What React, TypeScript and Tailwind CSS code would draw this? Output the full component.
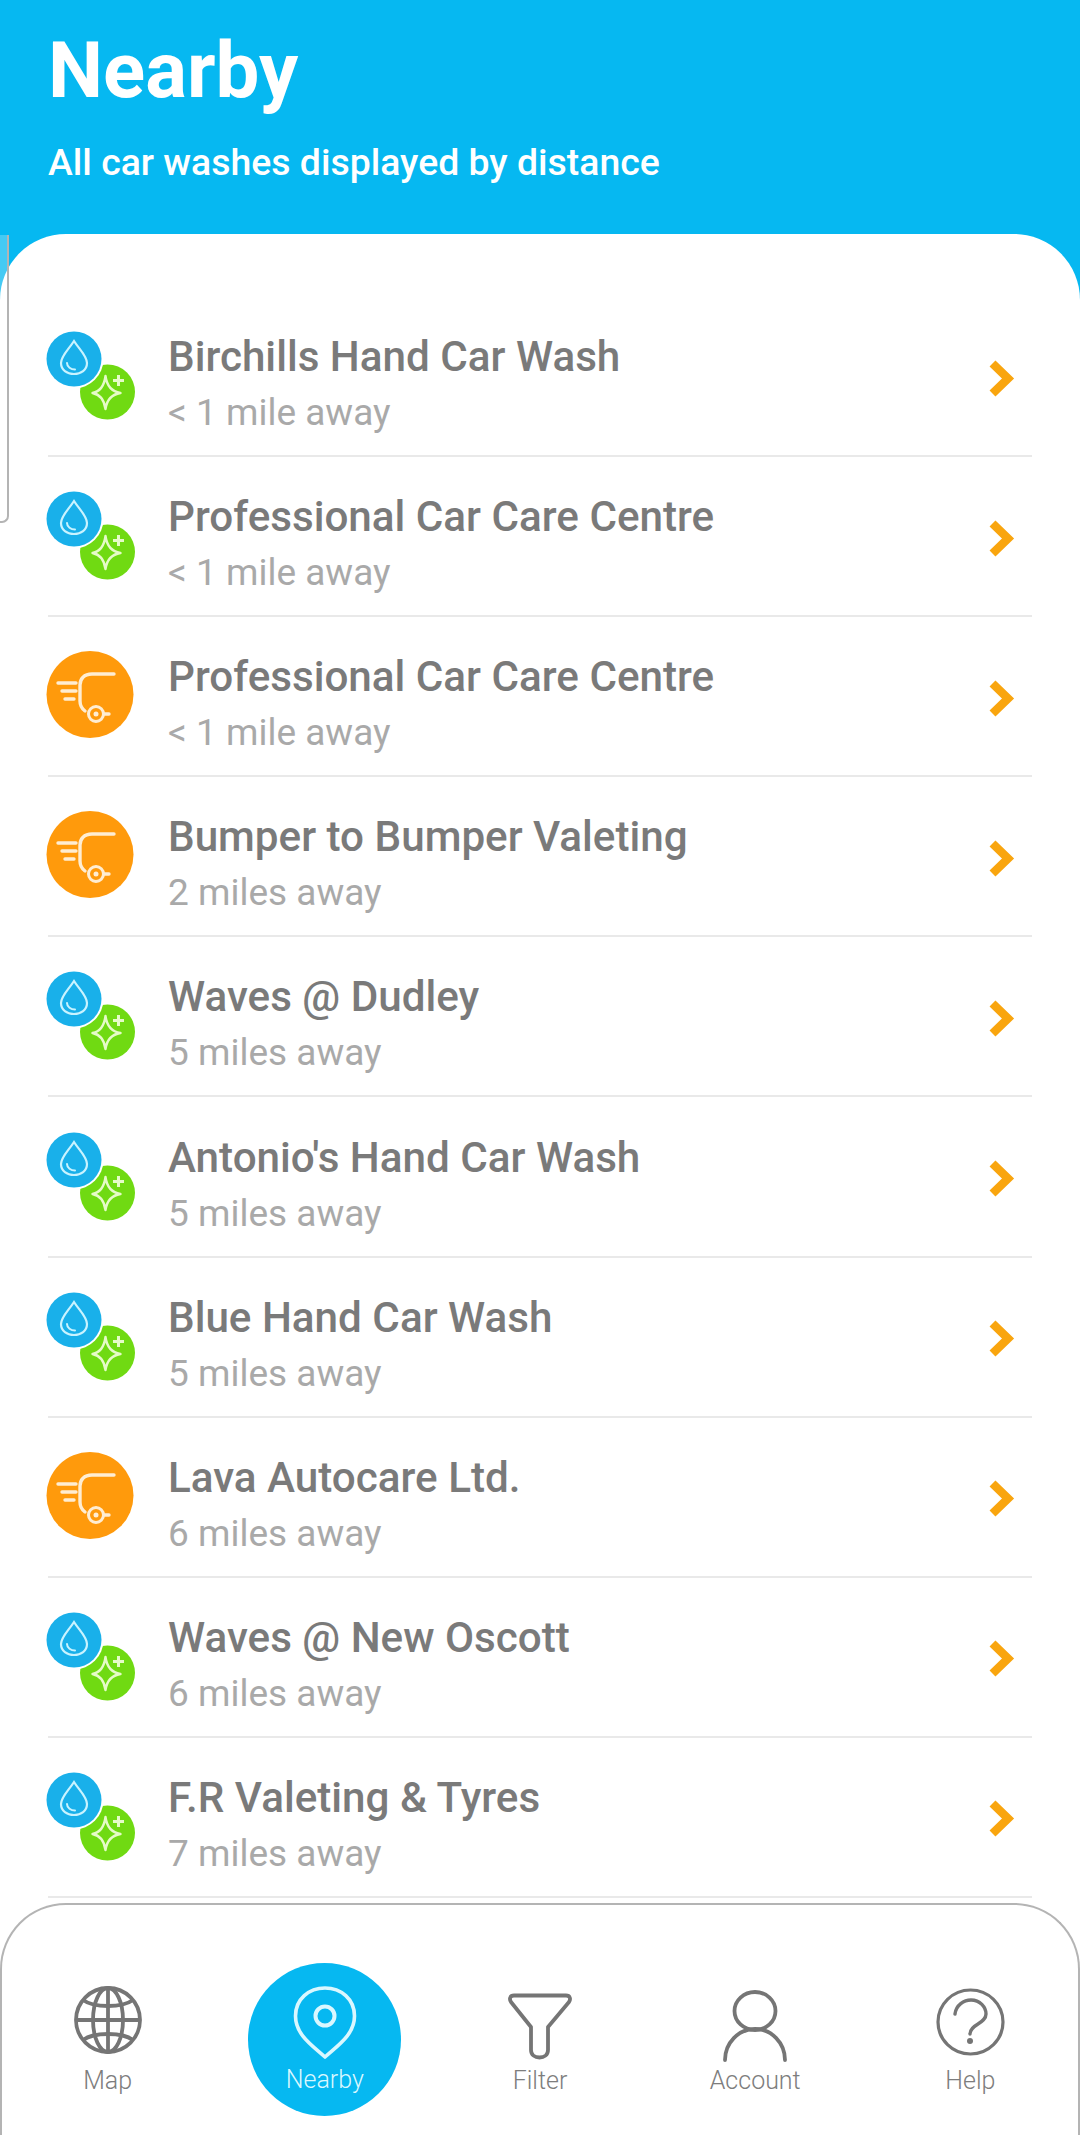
import type { ReactNode } from "react";

function WashIcon() {
  return (
    <svg viewBox="0 0 90 90" className="h-[90px] w-[90px]" fill="none">
      <circle cx="61.500" cy="61" r="27.500" fill="#70da12" />
      <path d="M59.500 45 Q61.500 60 74.500 62 Q61.500 64 59.500 78 Q57.500 64 46.500 62 Q57.500 60 59.500 45Z" stroke="#e6fbc8" strokeWidth="2.400" strokeLinejoin="round" />
      <path d="M72.500 44v11M67 49.500h11" stroke="#e6fbc8" strokeWidth="3" />
      <circle cx="28" cy="28" r="29.500" fill="#fff" />
      <circle cx="28" cy="28" r="27.500" fill="#19b0ea" />
      <path d="M28 10 C23 18 15 25 15 32 C15 39 21 43 28 43 C35 43 41 39 41 32 C41 25 33 18 28 10Z" stroke="#c9f3ff" strokeWidth="2.200" />
      <path d="M21 32 C21 36 25 38.500 29 38.500" stroke="#c9f3ff" strokeWidth="2" strokeLinecap="round" />
    </svg>
  );
}

function TowIcon() {
  return (
    <svg viewBox="0 0 90 90" className="h-[90px] w-[90px]" fill="none">
      <circle cx="44" cy="43.500" r="43.500" fill="#ff9a0c" />
      <g stroke="#ffedd2" strokeLinecap="round" strokeWidth="3.400">
        <path d="M68 23H46C38 23 34 28 34 34V50C34 54 35 57 39 60" />
        <path d="M12 32H30M16 40H30M19 48H28" />
        <circle cx="50" cy="63" r="7.500" strokeWidth="3" />
        <path d="M58 63H63" />
      </g>
      <circle cx="50" cy="63" r="2.500" fill="#ffedd2" />
    </svg>
  );
}

function Chevron() {
  return (
    <svg viewBox="0 0 26 37" className="h-[37px] w-[26px]" fill="none">
      <path d="M3.500 3.500L19 18.500L3.500 33.500" stroke="#f9a50e" strokeWidth="8.500" />
    </svg>
  );
}

function GlobeIcon() {
  return (
    <svg viewBox="0 0 68 68" className="h-[68px] w-[68px]" fill="none" stroke="#757575" strokeWidth="3.800">
      <circle cx="34" cy="34" r="32" />
      <ellipse cx="34" cy="34" rx="15" ry="32" />
      <path d="M34 2V66M2 34H66" />
      <path d="M9 14C20 22 48 22 59 14M9 54C20 46 48 46 59 54" />
    </svg>
  );
}

function PinIcon() {
  return (
    <svg viewBox="0 0 64 74" className="h-[74px] w-[64px]" fill="none" stroke="#d9f7ff" strokeWidth="3.600">
      <path d="M32 71 C20 60 2.500 49 2.500 30 C2.500 13 16 2 32 2 C48 2 61.500 13 61.500 30 C61.500 49 44 60 32 71Z" strokeLinejoin="round" />
      <circle cx="32" cy="30" r="9.500" strokeWidth="4" />
    </svg>
  );
}

function FunnelIcon() {
  return (
    <svg viewBox="0 0 64 67" className="h-[67px] w-[64px]" fill="none" stroke="#757575" strokeWidth="3.800">
      <path d="M6 2.500H58C62 2.500 63 6 61 9L40 34V57C40 62 36 64.500 31.500 64.500C27 64.500 23 62 23 57V34L3 9C1 6 2 2.500 6 2.500Z" strokeLinejoin="round" />
    </svg>
  );
}

function PersonIcon() {
  return (
    <svg viewBox="0 0 64 72" className="h-[72px] w-[64px]" fill="none" stroke="#757575" strokeWidth="3.800" strokeLinecap="round">
      <ellipse cx="32" cy="21" rx="20.500" ry="19" />
      <path d="M2 70A30 31 0 0 1 62 70" />
    </svg>
  );
}

function HelpIcon() {
  return (
    <svg viewBox="0 0 69 68" className="h-[68px] w-[69px]" fill="none" stroke="#757575" strokeWidth="3.200">
      <ellipse cx="34.500" cy="34" rx="32.500" ry="32" />
      <path d="M19 26C20 17 28 12 35 12C44 12 50 19 50 26C50 36 34 36 34 46" strokeWidth="3.400" strokeLinecap="round" />
      <circle cx="34" cy="53" r="3" fill="#757575" stroke="none" />
    </svg>
  );
}

const rows = [
  ["wash", "Birchills Hand Car Wash", "< 1 mile away"],
  ["wash", "Professional Car Care Centre", "< 1 mile away"],
  ["tow", "Professional Car Care Centre", "< 1 mile away"],
  ["tow", "Bumper to Bumper Valeting", "2 miles away"],
  ["wash", "Waves @ Dudley", "5 miles away"],
  ["wash", "Antonio's Hand Car Wash", "5 miles away"],
  ["wash", "Blue Hand Car Wash", "5 miles away"],
  ["tow", "Lava Autocare Ltd.", "6 miles away"],
  ["wash", "Waves @ New Oscott", "6 miles away"],
  ["wash", "F.R Valeting & Tyres", "7 miles away"],
];

function NavItem({ icon, label, pad, shift = "" }: { icon: ReactNode; label: string; pad: string; shift?: string }) {
  return (
    <div className={`flex flex-col items-center ${shift}`}>
      <div className={`flex h-[161px] items-end justify-center ${pad}`}>{icon}</div>
      <span className="text-[25px] font-light leading-[30px] text-[#7d7d7d]">{label}</span>
    </div>
  );
}

export default function App() {
  return (
    <div className="relative flex h-[2135px] w-[1080px] flex-col overflow-hidden bg-[#06b8f1] font-['Roboto',sans-serif]">
      <header className="h-[234px] shrink-0 px-[48px] pt-[25px] text-white">
        <h1 className="text-[78px] font-bold leading-[92px]">Nearby</h1>
        <p className="mt-[23px] text-[37.400px] font-medium leading-[44px]">All car washes displayed by distance</p>
      </header>

      <main className="flex min-h-0 flex-1 flex-col overflow-hidden rounded-t-[66px] bg-white">
        <ul className="h-[1669px] shrink-0 overflow-hidden pt-[63px]">
          {rows.map(([kind, name, dist]) => (
            <li key={name + kind} className="mx-[48px] flex h-[160.100px] items-center border-b-2 border-[#e9e9e9]">
              <div className="w-[120px] shrink-0 -translate-x-[2px]">{kind === "wash" ? <WashIcon /> : <TowIcon />}</div>
              <div className="flex-1 pt-[16px]">
                <div className="text-[42.200px] font-[485] leading-[48px] text-[#7a7a7a]">{name}</div>
                <div className="mt-[10px] text-[37px] leading-[44px] text-[#a9a9a9]">{dist}</div>
              </div>
              <div className="mr-[17px] mt-[4px]"><Chevron /></div>
            </li>
          ))}
        </ul>
        <nav className="grid flex-1 grid-cols-5 rounded-t-[66px] border-x-2 border-t-2 border-[#b4b4b4] bg-white">
          <NavItem icon={<GlobeIcon />} label="Map" pad="pb-[12px]" shift="-translate-x-[2px]" />
          <div className="flex justify-center pt-[58px]">
            <div className="flex h-[153px] w-[153px] flex-col items-center rounded-full bg-[#06b8f1] pt-[23px]">
              <PinIcon />
              <span className="mt-[5px] text-[25px] font-light leading-[30px] text-[#d9f7ff]">Nearby</span>
            </div>
          </div>
          <NavItem icon={<FunnelIcon />} label="Filter" pad="pb-[6px]" />
          <NavItem icon={<PersonIcon />} label="Account" pad="pb-[4px]" />
          <NavItem icon={<HelpIcon />} label="Help" pad="pb-[10px]" />
        </nav>
      </main>

      <div className="absolute left-0 top-[235px] h-[288px] w-[9px] rounded-br-[7px] border-b-2 border-r-2 border-[#b4b4b4] bg-white/25" />
    </div>
  );
}
